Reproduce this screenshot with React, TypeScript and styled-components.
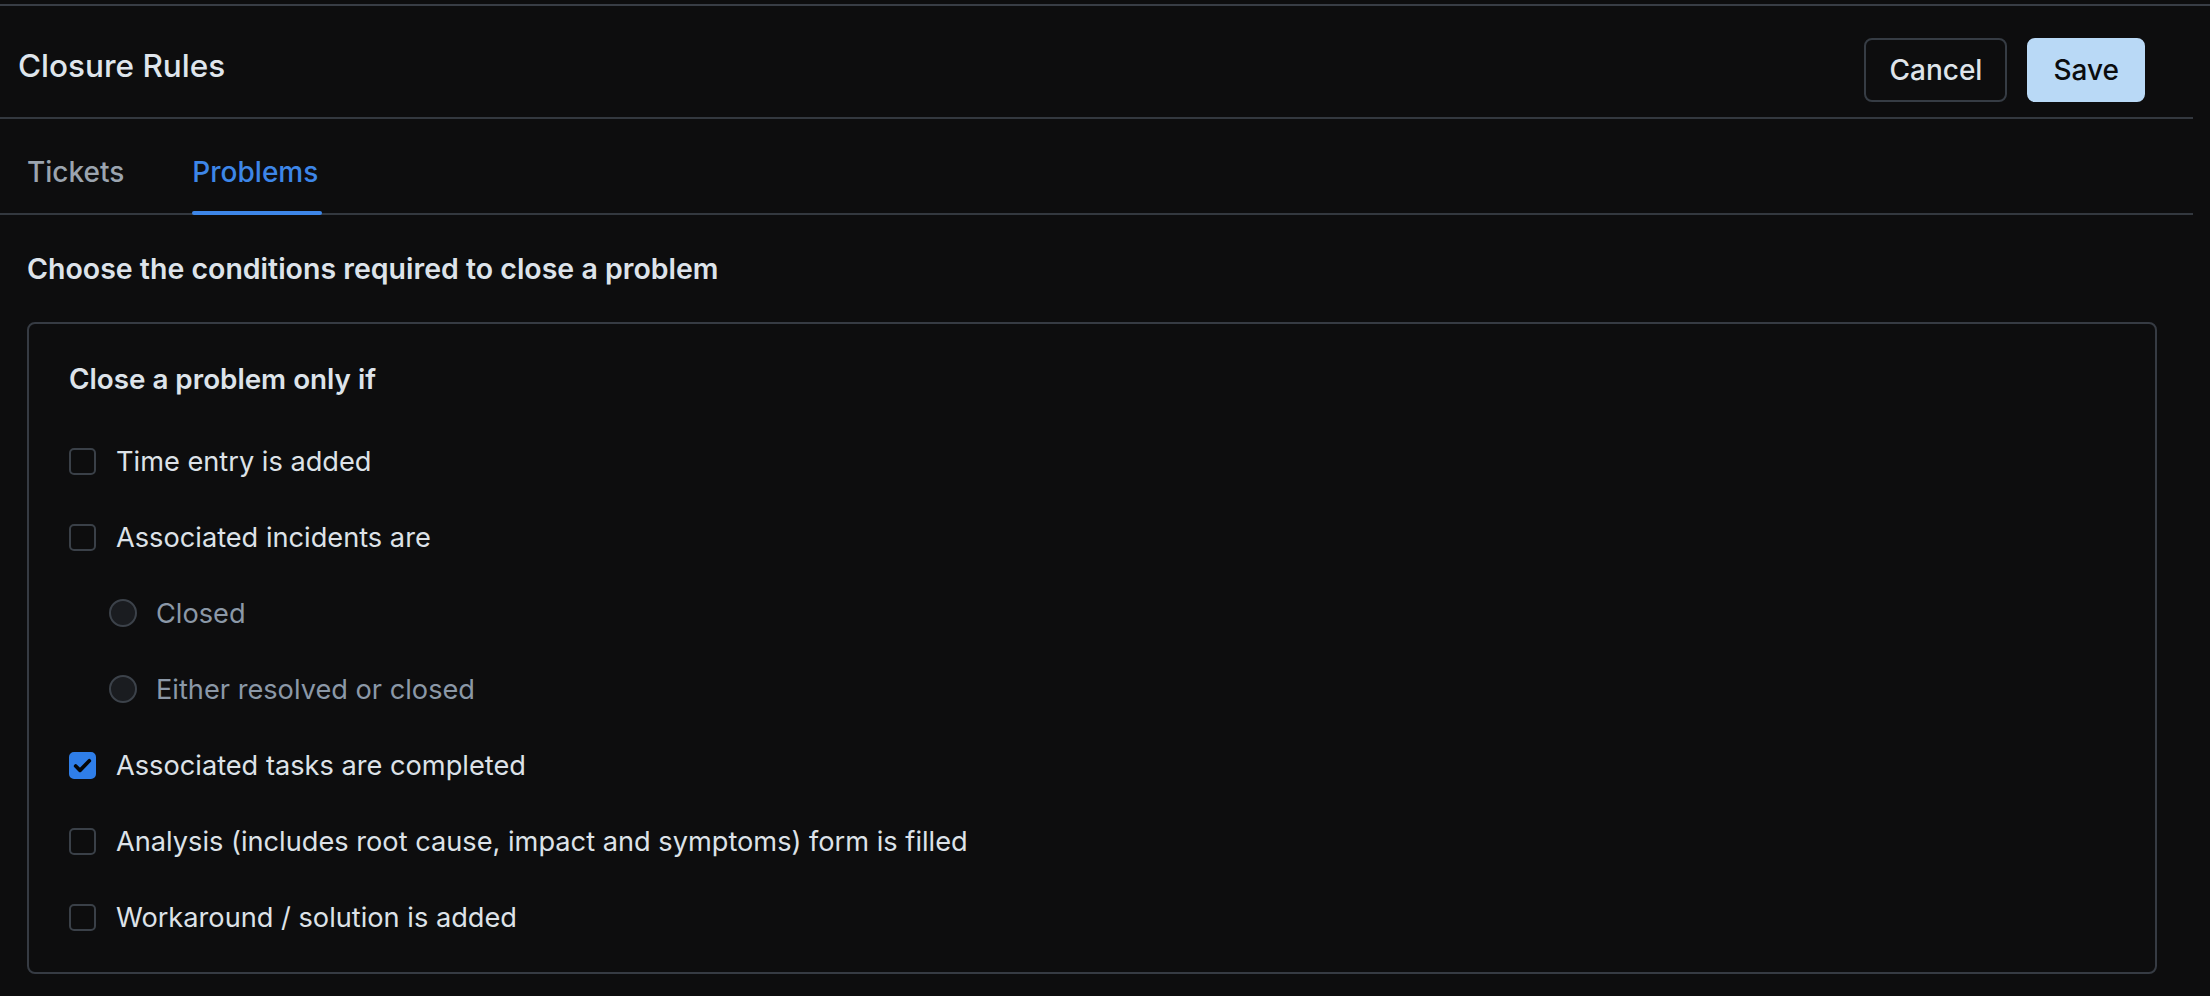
import React, { useState } from 'react';
import styled, { createGlobalStyle } from 'styled-components';

const fontFamily = `Inter, "Noto Sans", "Liberation Sans", sans-serif`;

const GlobalStyle = createGlobalStyle`
  html, body {
    margin: 0;
    padding: 0;
    background: #0d0d0e;
  }
  body {
    font-family: ${fontFamily};
    -webkit-font-smoothing: antialiased;
  }
  * { box-sizing: border-box; }
`;

const Page = styled.div`
  width: 2193px;
  min-height: 996px;
  padding-top: 4px;
  color: #dde3ea;
`;

const TopRule = styled.div`
  height: 2px;
  width: 2210px;
  background: #383d45;
`;

const Header = styled.header`
  display: flex;
  align-items: flex-start;
  justify-content: space-between;
  padding: 32px 48px 15px 18px;
  border-bottom: 2px solid #33383f;
`;

const Title = styled.h1`
  margin: 0;
  padding-top: 8px;
  font-size: 31.5px;
  line-height: 40px;
  font-weight: 500;
  color: #dfe5ec;
`;

const Actions = styled.div`
  display: flex;
  gap: 20px;
`;

const Button = styled.button<{ $primary?: boolean }>`
  height: 64px;
  padding: 0 ${({ $primary }) => ($primary ? '24px' : '23px')};
  border-radius: 8px;
  font-family: ${fontFamily};
  font-size: 28px;
  font-weight: 500;
  cursor: pointer;
  border: 2px solid ${({ $primary }) => ($primary ? '#b9d9f6' : '#363c44')};
  background: ${({ $primary }) => ($primary ? '#b9d9f6' : 'transparent')};
  color: ${({ $primary }) => ($primary ? '#0b0c0e' : '#dfe4ea')};
`;

const TabBar = styled.nav`
  display: flex;
  gap: 64px;
  padding-left: 27px;
  border-bottom: 2px solid #33383f;
`;

const Tab = styled.button<{ $active?: boolean }>`
  position: relative;
  padding: 33px 4px 21px 0;
  background: none;
  border: none;
  font-family: ${fontFamily};
  font-size: 28px;
  line-height: 40px;
  font-weight: 500;
  cursor: pointer;
  color: ${({ $active }) => ($active ? '#3d86e8' : '#9ba4af')};

  &::after {
    content: '';
    display: ${({ $active }) => ($active ? 'block' : 'none')};
    position: absolute;
    left: 0;
    right: 0;
    bottom: -2px;
    height: 4px;
    border-radius: 2px;
    background: #3d86e8;
  }
`;

const Content = styled.main`
  padding: 34px 36px 0 27px;
`;

const SectionTitle = styled.h2`
  margin: 0 0 33px;
  font-size: 28.5px;
  line-height: 40px;
  font-weight: 600;
  color: #dde3ea;
`;

const Card = styled.section`
  border: 2px solid #363b43;
  border-radius: 8px;
  padding: 35px 40px 17px;
`;

const CardTitle = styled.h3`
  margin: 0 0 24px;
  font-size: 27.8px;
  line-height: 40px;
  font-weight: 600;
  color: #dde3ea;
`;

const OptionRow = styled.label<{ $nested?: boolean; $muted?: boolean }>`
  display: flex;
  align-items: center;
  gap: ${({ $nested }) => ($nested ? '19px' : '20px')};
  height: 76px;
  padding-left: ${({ $nested }) => ($nested ? '40px' : '0')};
  font-size: 27.2px;
  color: ${({ $muted }) => ($muted ? '#8b98a7' : '#dde2e8')};
  cursor: pointer;
`;

const Box = styled.span<{ $checked?: boolean }>`
  flex: none;
  width: 27px;
  height: 27px;
  border-radius: 5px;
  border: 2px solid ${({ $checked }) => ($checked ? '#2f7ee8' : '#3a4048')};
  background: ${({ $checked }) => ($checked ? '#2f7ee8' : 'transparent')};
  display: flex;
  align-items: center;
  justify-content: center;
`;

const Radio = styled.span`
  flex: none;
  width: 28px;
  height: 28px;
  border-radius: 50%;
  border: 2px solid #3c424a;
  background: #1a1c20;
`;

type Option = { label: string; kind: 'check' | 'radio'; checked?: boolean };

const options: Option[] = [
  { label: 'Time entry is added', kind: 'check' },
  { label: 'Associated incidents are', kind: 'check' },
  { label: 'Closed', kind: 'radio' },
  { label: 'Either resolved or closed', kind: 'radio' },
  { label: 'Associated tasks are completed', kind: 'check', checked: true },
  { label: 'Analysis (includes root cause, impact and symptoms) form is filled', kind: 'check' },
  { label: 'Workaround / solution is added', kind: 'check' },
];

const Check = () => (
  <svg width="21" height="21" viewBox="0 0 16 16" fill="none">
    <path d="M2.8 8.4l3.3 3.3L13.2 4.4" stroke="#050607" strokeWidth="2.8" strokeLinecap="round" strokeLinejoin="round" />
  </svg>
);

export default function App() {
  const [tab, setTab] = useState('Problems');
  const [values, setValues] = useState(options.map((o) => !!o.checked));

  return (
    <>
      <GlobalStyle />
      <Page>
        <TopRule />
        <Header>
          <Title>Closure Rules</Title>
          <Actions>
            <Button>Cancel</Button>
            <Button $primary>Save</Button>
          </Actions>
        </Header>
        <TabBar>
          {['Tickets', 'Problems'].map((t) => (
            <Tab key={t} $active={tab === t} onClick={() => setTab(t)}>
              {t}
            </Tab>
          ))}
        </TabBar>
        <Content>
          <SectionTitle>Choose the conditions required to close a problem</SectionTitle>
          <Card>
            <CardTitle>Close a problem only if</CardTitle>
            {options.map((o, i) => (
              <OptionRow
                key={o.label}
                $nested={o.kind === 'radio'}
                $muted={o.kind === 'radio'}
                onClick={() => o.kind === 'check' && setValues((v) => v.map((x, j) => (j === i ? !x : x)))}
              >
                {o.kind === 'radio' ? <Radio /> : <Box $checked={values[i]}>{values[i] && <Check />}</Box>}
                {o.label}
              </OptionRow>
            ))}
          </Card>
        </Content>
      </Page>
    </>
  );
}
